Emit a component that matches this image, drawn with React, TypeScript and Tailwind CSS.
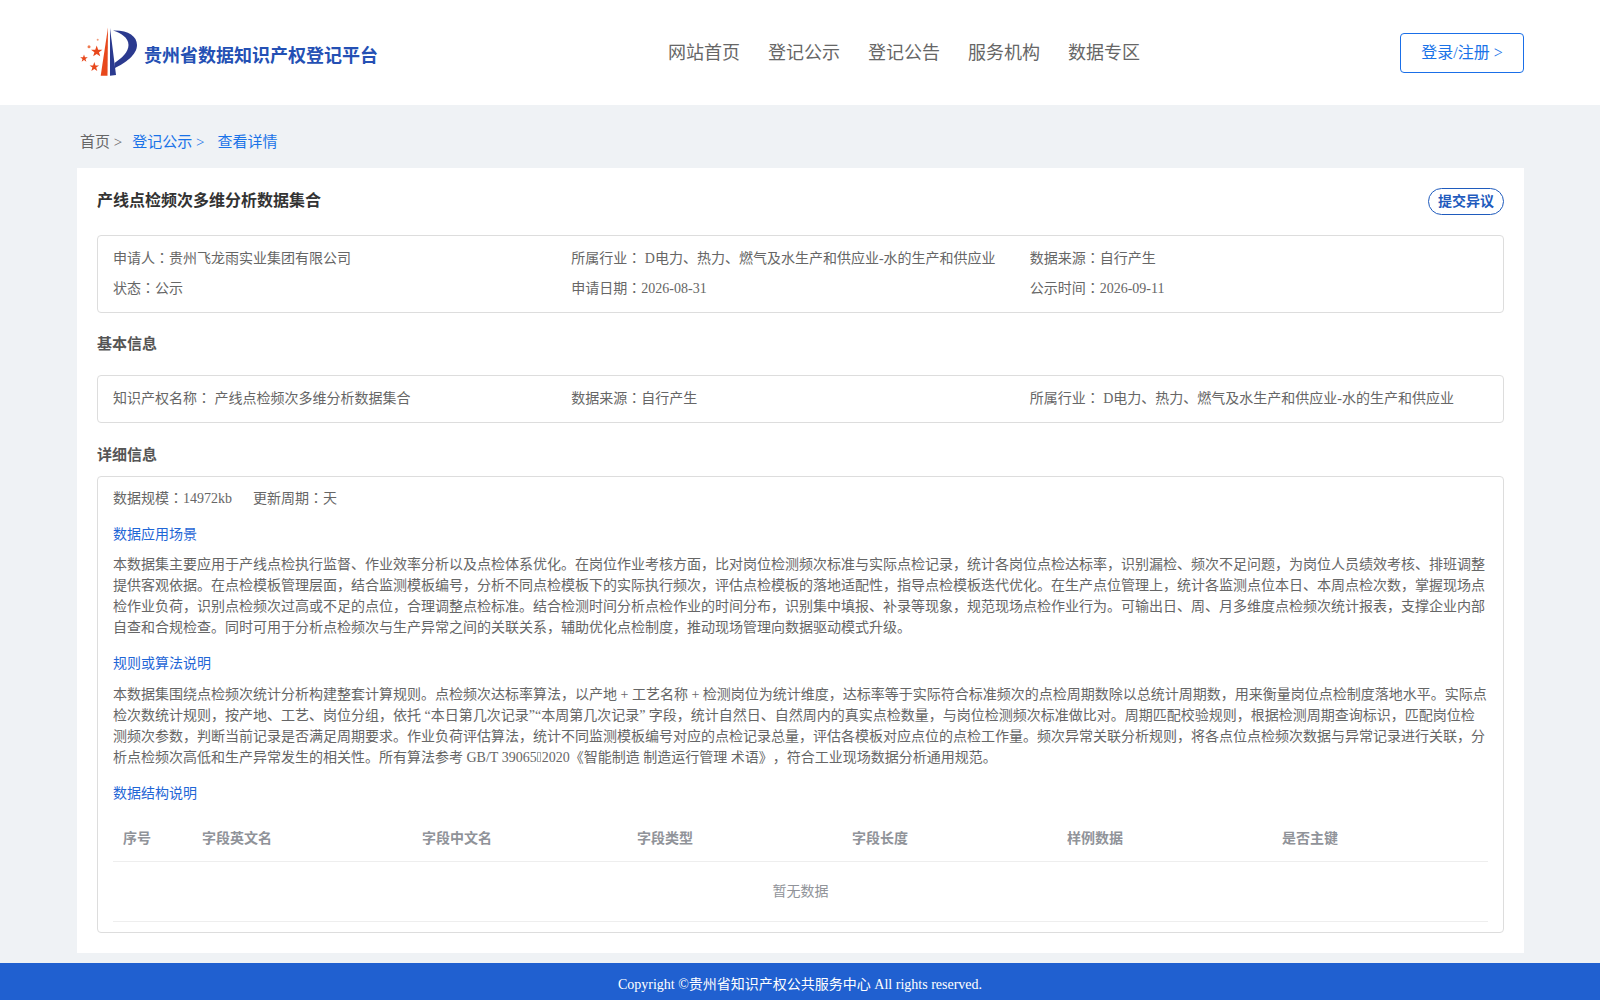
const navItems = ['网站首页', '登记公示', '登记公告', '服务机构', '数据专区']
const columns = ['序号', '字段英文名', '字段中文名', '字段类型', '字段长度', '样例数据', '是否主键']

const scene =
  '本数据集主要应用于产线点检执行监督、作业效率分析以及点检体系优化。在岗位作业考核方面，比对岗位检测频次标准与实际点检记录，统计各岗位点检达标率，识别漏检、频次不足问题，为岗位人员绩效考核、排班调整提供客观依据。在点检模板管理层面，结合监测模板编号，分析不同点检模板下的实际执行频次，评估点检模板的落地适配性，指导点检模板迭代优化。在生产点位管理上，统计各监测点位本日、本周点检次数，掌握现场点检作业负荷，识别点检频次过高或不足的点位，合理调整点检标准。结合检测时间分析点检作业的时间分布，识别集中填报、补录等现象，规范现场点检作业行为。可输出日、周、月多维度点检频次统计报表，支撑企业内部自查和合规检查。同时可用于分析点检频次与生产异常之间的关联关系，辅助优化点检制度，推动现场管理向数据驱动模式升级。'

const rulesHead =
  '本数据集围绕点检频次统计分析构建整套计算规则。点检频次达标率算法，以产地 + 工艺名称 + 检测岗位为统计维度，达标率等于实际符合标准频次的点检周期数除以总统计周期数，用来衡量岗位点检制度落地水平。实际点检次数统计规则，按产地、工艺、岗位分组，依托 “本日第几次记录”“本周第几次记录” 字段，统计自然日、自然周内的真实点检数量，与岗位检测频次标准做比对。周期匹配校验规则，根据检测周期查询标识，匹配岗位检测频次参数，判断当前记录是否满足周期要求。作业负荷评估算法，统计不同监测模板编号对应的点检记录总量，评估各模板对应点位的点检工作量。频次异常关联分析规则，将各点位点检频次数据与异常记录进行关联，分析点检频次高低和生产异常发生的相关性。所有算法参考 GB/T 39065'
const rulesTail = '2020《智能制造 制造运行管理 术语》，符合工业现场数据分析通用规范。'

const starPoints = '0,-1 0.24,-0.31 0.95,-0.31 0.38,0.12 0.59,0.81 0,0.4 -0.59,0.81 -0.38,0.12 -0.95,-0.31 -0.24,-0.31'

function Logo() {
  return (
    <svg width="62" height="54" viewBox="0 0 62 54" className="-mt-[4px] shrink-0">
      <path d="M22.7 50.7 L30 2.5 L29.5 50.7 Z" fill="#e8481c" />
      <path d="M32 3 L38 50 L32 50.7 Z" fill="#2b3a8f" />
      <path
        d="M35 5.5 C50 5 59 11 59 20 C59 30 47 38 37 43 L36.5 38 C44 33 50.5 27 50.5 20 C50.5 12.5 43 8 35 5.5 Z"
        fill="#2b3a8f"
      />
      <polygon fill="#e8481c" points={starPoints} transform="translate(18.7 26.5) scale(6)" />
      <polygon fill="#e8481c" points={starPoints} transform="translate(6 33.5) scale(4)" />
      <polygon fill="#e8481c" points={starPoints} transform="translate(16.3 42) scale(5)" />
      <circle cx="11" cy="21.7" r="1.5" fill="#ef7a50" />
      <circle cx="19.7" cy="14.7" r="1" fill="#ef9a7a" />
    </svg>
  )
}

function Colon() {
  return <span className="font-['Noto_Sans_CJK_TC'] leading-[0]">：</span>
}

function Info({ label, value }: { label: string; value: string }) {
  return (
    <div>
      {label}
      <Colon />
      {value}
    </div>
  )
}

function Section({ title }: { title: string }) {
  return <h3 className="text-[15px] font-bold leading-[20px] text-[#555]">{title}</h3>
}

function BlueTitle({ children }: { children: React.ReactNode }) {
  return <div className="text-[14px] leading-[20px] text-[#1f66d6]">{children}</div>
}

export default function App() {
  return (
    <div className="flex h-[1000px] flex-col overflow-hidden bg-[#eff2f5] font-['Liberation_Serif','Noto_Sans_CJK_SC',serif] text-[14px] text-[#666] [text-spacing-trim:space-all]">
      <header className="h-[105px] shrink-0 bg-white px-[76px]">
        <div className="flex h-full items-center">
          <div className="ml-[2px] flex w-[590px] shrink-0 items-center pt-[3px]">
            <Logo />
            <span className="ml-[4px] mt-[4px] text-[18px] font-bold text-[#2450b4]">贵州省数据知识产权登记平台</span>
          </div>
          <nav className="flex gap-[28px] pt-[2px]">
            {navItems.map(item => (
              <a key={item} className="text-[18px] text-[#666]">
                {item}
              </a>
            ))}
          </nav>
          <button className="ml-auto h-[40px] w-[124px] rounded-[4px] border border-[#1a6fe8] pt-[1px] text-[16px] text-[#1a73e8]">
            登录/注册 &gt;
          </button>
        </div>
      </header>

      <div className="flex h-[63px] shrink-0 items-center px-[80px] pt-[12px] text-[15px]">
        <span className="text-[#666]">首页 &gt;</span>
        <span className="ml-[10px] text-[#1a73e8]">登记公示 &gt;</span>
        <span className="ml-[13px] text-[#1a73e8]">查看详情</span>
      </div>

      <main className="ml-[77px] mr-[76px] h-[785px] shrink-0 bg-white px-[20px] pt-[20px]">
        <div className="flex items-start justify-between">
          <h2 className="pt-[1px] text-[16px] font-bold leading-[24px] text-[#333]">产线点检频次多维分析数据集合</h2>
          <button className="h-[27px] w-[76px] rounded-[14px] border border-[#1f5bbd] text-[14px] font-bold text-[#1f5bbd]">
            提交异议
          </button>
        </div>

        <div className="mt-[20px] grid h-[78px] grid-cols-3 content-center gap-y-[10px] rounded-[4px] border border-[#ddd] px-[15px] leading-[20px]">
          <Info label="申请人" value="贵州飞龙雨实业集团有限公司" />
          <Info label="所属行业" value=" D电力、热力、燃气及水生产和供应业-水的生产和供应业" />
          <Info label="数据来源" value="自行产生" />
          <Info label="状态" value="公示" />
          <Info label="申请日期" value="2026-08-31" />
          <Info label="公示时间" value="2026-09-11" />
        </div>

        <div className="mt-[21px]">
          <Section title="基本信息" />
        </div>

        <div className="mt-[21px] grid h-[48px] grid-cols-3 items-center rounded-[4px] border border-[#ddd] px-[15px] pb-[2px]">
          <Info label="知识产权名称" value=" 产线点检频次多维分析数据集合" />
          <Info label="数据来源" value="自行产生" />
          <Info label="所属行业" value=" D电力、热力、燃气及水生产和供应业-水的生产和供应业" />
        </div>

        <div className="mt-[22px]">
          <Section title="详细信息" />
        </div>

        <div className="mt-[11px] h-[457px] rounded-[4px] border border-[#ddd] px-[15px] pt-[12px]">
          <div className="flex gap-[21px] leading-[20px]">
            <span>
              数据规模
              <Colon />
              14972kb
            </span>
            <span>
              更新周期
              <Colon />天
            </span>
          </div>

          <div className="mt-[16px]">
            <BlueTitle>数据应用场景</BlueTitle>
          </div>
          <p className="mt-[9px] text-[14px] leading-[21px]">{scene}</p>

          <div className="mt-[16px]">
            <BlueTitle>规则或算法说明</BlueTitle>
          </div>
          <p className="mt-[10px] text-[14px] leading-[21px]">
            {rulesHead}
            <span className="mx-[0.5px] inline-block h-[10px] w-[4px] border border-[#aaa]" />
            {rulesTail}
          </p>

          <div className="mt-[16px]">
            <BlueTitle>数据结构说明</BlueTitle>
          </div>

          <div className="mt-[10px]">
            <div className="grid h-[48px] grid-cols-[79px_220px_215px_215px_215px_215px_216px] items-center border-b border-[#eee] pt-[2px]">
              {columns.map(col => (
                <div key={col} className="px-[10px] font-bold text-[#909399]">
                  {col}
                </div>
              ))}
            </div>
            <div className="flex h-[60px] items-center justify-center border-b border-[#eee] text-[#909399]">暂无数据</div>
          </div>
        </div>
      </main>

      <footer className="mt-[10px] flex h-[37px] shrink-0 items-center justify-center bg-[#2060d0] pt-[5px] text-[14px] text-white">
        Copyright ©贵州省知识产权公共服务中心 All rights reserved.
      </footer>
    </div>
  )
}
